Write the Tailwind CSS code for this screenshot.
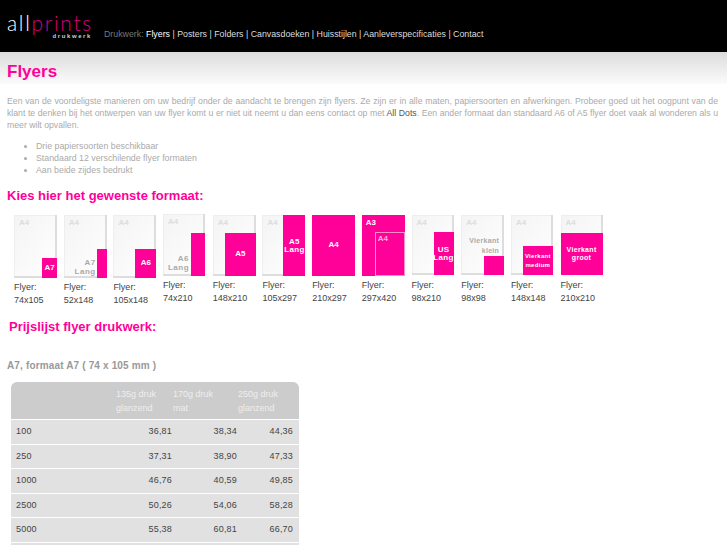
<!DOCTYPE html>
<html lang="nl">
<head>
    <meta charset="UTF-8">
    <title>Flyers - Allprints drukwerk</title>
    <script src="https://cdn.jsdelivr.net/npm/@tailwindcss/browser@4"></script>
</head>
<body class="bg-white h-[545px] overflow-hidden font-['Liberation_Sans',Arial,sans-serif] text-[9px] text-[#aaa]">
    <!-- header -->
    <div class="bg-black h-[52px] flex pl-[7px]">
        <div class="w-[85px] mr-[12px] pt-[12px] text-right">
            <div class="text-[21px] leading-[21px] text-left tracking-[1.7px] font-['Lato',sans-serif] font-light text-white">all<span class="text-[#d6007f]">prints</span></div>
            <div class="text-[6px] leading-[7px] font-bold tracking-[1.6px] text-[#ccc]">drukwerk</div>
        </div>
        <div class="pt-[28px] text-[8.8px] leading-[12px] text-[#ddd]"><span class="text-[#777]">Drukwerk:</span> <span class="text-white">Flyers</span> | Posters | Folders | Canvasdoeken | Huisstijlen | Aanleverspecificaties | Contact</div>
    </div>

    <!-- titel -->
    <div class="h-[32px] bg-gradient-to-b from-[#dcdcdc] to-[#fbfbfb] pl-[7px] pt-[10px]">
        <h1 class="text-[17px] leading-[20px] font-bold text-[#ff0099]">Flyers</h1>
    </div>

    <div class="pl-[7px] pr-[9px] pt-[11px] text-[8.8px]">
        <p class="text-[8.7px] leading-[12px] text-justify">Een van de voordeligste manieren om uw bedrijf onder de aandacht te brengen zijn flyers. Ze zijn er in alle maten, papiersoorten en afwerkingen. Probeer goed uit het oogpunt van de klant te denken bij het ontwerpen van uw flyer komt u er niet uit neemt u dan eens contact op met <span class="text-[#555]">All Dots</span>. Een ander formaat dan standaard A6 of A5 flyer doet vaak al wonderen als u meer wilt opvallen.</p>
        <ul class="list-disc pl-[29px] mt-[9px] leading-[12px]">
            <li>Drie papiersoorten beschikbaar</li>
            <li>Standaard 12 verschilende flyer formaten</li>
            <li>Aan beide zijdes bedrukt</li>
        </ul>
        <h2 class="text-[13px] leading-[16px] font-bold text-[#ff0099] mt-[12px]">Kies hier het gewenste formaat:</h2>
    </div>

    <!-- formaten -->
    <div class="flex pl-[14px] mt-[11px] h-[92px] text-[#444] leading-[12.5px]">
        <div class="w-[49.7px] shrink-0">
            <div class="relative w-[43px] h-[63px] bg-gradient-to-br from-[#f3f4f3] to-white shadow-[inset_-2px_-2px_0_#ddd,inset_1px_1px_0_#eee] text-[8px] font-bold text-[#ddd]">
                <span class="absolute left-[5px] top-[2px]">A4</span>
                <div class="absolute right-0 bottom-0 w-[15px] h-[20px] bg-[#ff0099] text-white flex items-center justify-center">A7</div>
            </div>
            <div class="mt-[3px]">Flyer:<br>74x105</div>
        </div>
        <div class="w-[49.7px] shrink-0">
            <div class="relative w-[43px] h-[63px] bg-gradient-to-br from-[#f3f4f3] to-white shadow-[inset_-2px_-2px_0_#ddd,inset_1px_1px_0_#eee] text-[8px] font-bold text-[#ddd]">
                <span class="absolute left-[5px] top-[2px]">A4</span>
                <div class="absolute right-0 bottom-0 w-[10px] h-[29px] bg-[#ff0099]"></div>
                <div class="absolute right-[11px] bottom-[2px] text-right leading-[9px] tracking-[0.5px] text-[#aaa]">A7<br>Lang</div>
            </div>
            <div class="mt-[3px]">Flyer:<br>52x148</div>
        </div>
        <div class="w-[49.7px] shrink-0">
            <div class="relative w-[43px] h-[63px] bg-gradient-to-br from-[#f3f4f3] to-white shadow-[inset_-2px_-2px_0_#ddd,inset_1px_1px_0_#eee] text-[8px] font-bold text-[#ddd]">
                <span class="absolute left-[5px] top-[2px]">A4</span>
                <div class="absolute right-0 bottom-0 w-[21px] h-[29px] bg-[#ff0099] text-white flex items-center justify-center">A6</div>
            </div>
            <div class="mt-[3px]">Flyer:<br>105x148</div>
        </div>
        <div class="w-[49.7px] shrink-0 -mt-[1px]">
            <div class="relative w-[42px] h-[62px] bg-gradient-to-br from-[#f3f4f3] to-white shadow-[inset_-2px_-2px_0_#ddd,inset_1px_1px_0_#eee] text-[8px] font-bold text-[#ddd]">
                <span class="absolute left-[5px] top-[2px]">A4</span>
                <div class="absolute right-0 bottom-0 w-[14px] h-[43px] bg-[#ff0099]"></div>
                <div class="absolute right-[16px] bottom-[4px] text-right leading-[9px] tracking-[0.5px] text-[#aaa]">A6<br>Lang</div>
            </div>
            <div class="mt-[3px]">Flyer:<br>74x210</div>
        </div>
        <div class="w-[49.7px] shrink-0">
            <div class="relative w-[43px] h-[61px] bg-gradient-to-br from-[#f3f4f3] to-white shadow-[inset_-2px_-2px_0_#ddd,inset_1px_1px_0_#eee] text-[8px] font-bold text-[#ddd]">
                <span class="absolute left-[5px] top-[2px]">A4</span>
                <div class="absolute right-0 bottom-0 w-[31px] h-[43px] bg-[#ff0099] text-white flex items-center justify-center">A5</div>
            </div>
            <div class="mt-[3px]">Flyer:<br>148x210</div>
        </div>
        <div class="w-[49.7px] shrink-0">
            <div class="relative w-[43px] h-[61px] bg-gradient-to-br from-[#f3f4f3] to-white shadow-[inset_-2px_-2px_0_#ddd,inset_1px_1px_0_#eee] text-[8px] font-bold text-[#ddd]">
                <span class="absolute left-[5px] top-[2px]">A4</span>
                <div class="absolute right-0 bottom-0 w-[22px] h-[61px] bg-[#ff0099] text-white flex items-center justify-center text-center leading-[8px] tracking-[0.3px]">A5<br>Lang</div>
            </div>
            <div class="mt-[3px]">Flyer:<br>105x297</div>
        </div>
        <div class="w-[49.7px] shrink-0">
            <div class="w-[43px] h-[61px] bg-[#ff0099] text-white flex items-center justify-center text-[8px] font-bold">A4</div>
            <div class="mt-[3px]">Flyer:<br>210x297</div>
        </div>
        <div class="w-[49.7px] shrink-0">
            <div class="relative w-[43px] h-[61px] bg-[#ff0099] text-white text-[8px] font-bold">
                <span class="absolute left-[4px] top-[2px]">A3</span>
                <div class="absolute right-0 bottom-0 w-[30px] h-[44px] border border-[#ff8ccb] text-[#ffb3dd] pl-[2px] leading-[11px]">A4</div>
            </div>
            <div class="mt-[3px]">Flyer:<br>297x420</div>
        </div>
        <div class="w-[49.7px] shrink-0">
            <div class="relative w-[42px] h-[60px] bg-gradient-to-br from-[#f3f4f3] to-white shadow-[inset_-2px_-2px_0_#ddd,inset_1px_1px_0_#eee] text-[8px] font-bold text-[#ddd]">
                <span class="absolute left-[5px] top-[2px]">A4</span>
                <div class="absolute right-0 bottom-0 w-[20px] h-[43px] bg-[#ff0099] text-white flex items-center justify-center text-center leading-[8px] tracking-[0.3px]">US<br>Lang</div>
            </div>
            <div class="mt-[4px]">Flyer:<br>98x210</div>
        </div>
        <div class="w-[49.7px] shrink-0">
            <div class="relative w-[43px] h-[60px] bg-gradient-to-br from-[#f3f4f3] to-white shadow-[inset_-2px_-2px_0_#ddd,inset_1px_1px_0_#eee] text-[8px] font-bold text-[#ddd]">
                <span class="absolute left-[5px] top-[2px]">A4</span>
                <div class="absolute right-0 bottom-0 w-[20px] h-[19px] bg-[#ff0099]"></div>
                <div class="absolute right-[5px] top-[21px] text-right leading-[10px] text-[7px] tracking-[0.3px] text-[#aaa]">Vierkant<br>klein</div>
            </div>
            <div class="mt-[4px]">Flyer:<br>98x98</div>
        </div>
        <div class="w-[49.7px] shrink-0">
            <div class="relative w-[42px] h-[60px] bg-gradient-to-br from-[#f3f4f3] to-white shadow-[inset_-2px_-2px_0_#ddd,inset_1px_1px_0_#eee] text-[8px] font-bold text-[#ddd]">
                <span class="absolute left-[5px] top-[2px]">A4</span>
                <div class="absolute right-0 bottom-0 w-[30px] h-[29px] bg-[#ff0099] text-white flex items-center justify-center text-center text-[6px] leading-[9px] tracking-[0.3px]">Vierkant<br>medium</div>
            </div>
            <div class="mt-[4px]">Flyer:<br>148x148</div>
        </div>
        <div class="w-[49.7px] shrink-0">
            <div class="relative w-[42px] h-[60px] bg-gradient-to-br from-[#f3f4f3] to-white shadow-[inset_-2px_-2px_0_#ddd,inset_1px_1px_0_#eee] text-[8px] font-bold text-[#ddd]">
                <span class="absolute left-[5px] top-[2px]">A4</span>
                <div class="absolute inset-x-0 bottom-0 h-[42px] bg-[#ff0099] text-white flex items-center justify-center text-center text-[7px] leading-[8px] tracking-[0.3px]">Vierkant<br>groot</div>
            </div>
            <div class="mt-[4px]">Flyer:<br>210x210</div>
        </div>
    </div>

    <h2 class="text-[13px] leading-[16px] font-bold text-[#ff0099] pl-[9px] mt-[12px]">Prijslijst flyer drukwerk:</h2>
    <h3 class="text-[10px] leading-[13px] font-bold text-[#999] pl-[7px] mt-[24px] tracking-[0.15px]">A7, formaat A7 ( 74 x 105 mm )</h3>

    <!-- prijzen -->
    <div class="ml-[11px] mt-[10px] w-[288px]">
        <div class="grid grid-cols-[105px_57px_65px_61px] h-[37px] bg-[#ccc] rounded-t-[6px] text-[#eee] leading-[14px] pt-[5px]">
            <div></div>
            <div>135g druk<br>glanzend</div>
            <div>170g druk<br>mat</div>
            <div>250g druk<br>glanzend</div>
        </div>
        <div class="grid grid-cols-[105px_57px_65px_61px] items-center h-[24.5px] border-t border-white bg-[#e1e1e1] text-[#444] tracking-[0.2px]">
            <div class="pl-[5px]">100</div><div class="text-right pr-[1px]">36,81</div><div class="text-right pr-[1px]">38,34</div><div class="text-right pr-[6px]">44,36</div>
        </div>
        <div class="grid grid-cols-[105px_57px_65px_61px] items-center h-[24.5px] border-t border-white bg-[#e1e1e1] text-[#444] tracking-[0.2px]">
            <div class="pl-[5px]">250</div><div class="text-right pr-[1px]">37,31</div><div class="text-right pr-[1px]">38,90</div><div class="text-right pr-[6px]">47,33</div>
        </div>
        <div class="grid grid-cols-[105px_57px_65px_61px] items-center h-[24.5px] border-t border-white bg-[#e1e1e1] text-[#444] tracking-[0.2px]">
            <div class="pl-[5px]">1000</div><div class="text-right pr-[1px]">46,76</div><div class="text-right pr-[1px]">40,59</div><div class="text-right pr-[6px]">49,85</div>
        </div>
        <div class="grid grid-cols-[105px_57px_65px_61px] items-center h-[24.5px] border-t border-white bg-[#e1e1e1] text-[#444] tracking-[0.2px]">
            <div class="pl-[5px]">2500</div><div class="text-right pr-[1px]">50,26</div><div class="text-right pr-[1px]">54,06</div><div class="text-right pr-[6px]">58,28</div>
        </div>
        <div class="grid grid-cols-[105px_57px_65px_61px] items-center h-[24.5px] border-t border-white bg-[#e1e1e1] text-[#444] tracking-[0.2px]">
            <div class="pl-[5px]">5000</div><div class="text-right pr-[1px]">55,38</div><div class="text-right pr-[1px]">60,81</div><div class="text-right pr-[6px]">66,70</div>
        </div>
        <div class="h-[24.5px] border-t border-white bg-[#e1e1e1]"></div>
    </div>
</body>
</html>
